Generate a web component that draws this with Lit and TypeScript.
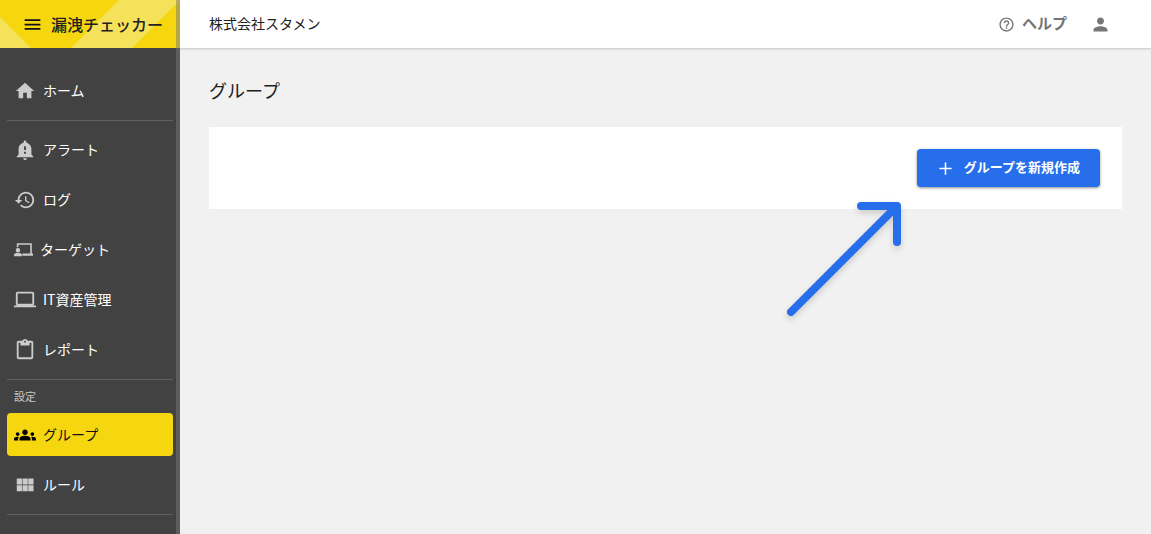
import { LitElement, html, css, svg, nothing } from "lit";
import { customElement, property, state } from "lit/decorators.js";
import { classMap } from "lit/directives/class-map.js";

const ICONS: Record<string, string> = {
  menu: "M3 18h18v-2H3v2zm0-5h18v-2H3v2zm0-7v2h18V6H3z",
  home: "M10 20v-6h4v6h5v-8h3L12 3 2 12h3v8z",
  alert:
    "M12 23c1.1 0 1.99-.89 1.99-1.99h-3.98c0 1.1.89 1.99 1.99 1.99zm7-6v-6c0-3.35-2.36-6.15-5.5-6.83V3c0-.83-.67-1.5-1.5-1.5s-1.5.67-1.5 1.5v1.17C7.36 4.85 5 7.65 5 11v6l-2 2v1h18v-1l-2-2zm-6-1h-2v-2h2v2zm0-4h-2V8h2v4z",
  log: "M13 3c-4.97 0-9 4.03-9 9H1l3.89 3.89.07.14L9 12H6c0-3.87 3.13-7 7-7s7 3.13 7 7-3.13 7-7 7c-1.93 0-3.68-.79-4.94-2.06l-1.42 1.42C8.27 19.99 10.51 21 13 21c4.97 0 9-4.03 9-9s-4.03-9-9-9zm-1 5v5l4.28 2.54.72-1.21-3.5-2.08V8H12z",
  target:
    "M3.500 4h19v13H24v3H10.500v-3H20.500V6H5.500v3h-2V4zM5 10a2.800 2.800 0 1 1 0 5.600A2.800 2.800 0 0 1 5 10zM0 20.500v-1.600c0-1.700 3-2.700 5-2.700s5 1 5 2.700v1.600H0z",
  laptop:
    "M20 18c1.100 0 1.990-.9 1.990-2L22 5c0-1.100-.9-2-2-2H4c-1.100 0-2 .9-2 2v11c0 1.100.9 2 2 2H0v2h24v-2h-4zM4 5h16v11H4V5z",
  report:
    "M19 2h-4.180C14.400.84 13.300 0 12 0c-1.300 0-2.400.84-2.820 2H5c-1.100 0-2 .9-2 2v16c0 1.100.9 2 2 2h14c1.100 0 2-.9 2-2V4c0-1.100-.9-2-2-2zm-7 0c.55 0 1 .45 1 1s-.45 1-1 1-1-.45-1-1 .45-1 1-1zm7 18H5V4h2v3h10V4h2v16z",
  groups:
    "M12 12.750c1.630 0 3.070.39 4.240.9 1.080.48 1.760 1.560 1.760 2.730V18H6v-1.610c0-1.180.68-2.260 1.760-2.730 1.170-.52 2.610-.91 4.240-.91zM4 13c1.100 0 2-.9 2-2s-.9-2-2-2-2 .9-2 2 .9 2 2 2zm1.130 1.100C4.760 14.040 4.390 14 4 14c-.99 0-1.930.21-2.780.58C.48 14.900 0 15.620 0 16.430V18h4.500v-1.610c0-.83.23-1.610.63-2.290zM20 13c1.100 0 2-.9 2-2s-.9-2-2-2-2 .9-2 2 .9 2 2 2zm4 3.430c0-.81-.48-1.530-1.220-1.850C21.930 14.210 20.990 14 20 14c-.39 0-.76.04-1.130.1.4.68.63 1.460.63 2.290V18H24v-1.570zM12 6c1.660 0 3 1.340 3 3s-1.340 3-3 3-3-1.340-3-3 1.340-3 3-3z",
  rules:
    "M3 5h5.700v6.500H3zM9.300 5H15v6.500H9.300zM15.600 5h5.700v6.500h-5.700zM3 12.200h5.700v6.500H3zM9.300 12.200H15v6.500H9.300zM15.600 12.200h5.700v6.500h-5.700z",
  help: "M11 18h2v-2h-2v2zm1-16C6.480 2 2 6.480 2 12s4.480 10 10 10 10-4.480 10-10S17.520 2 12 2zm0 18c-4.410 0-8-3.590-8-8s3.590-8 8-8 8 3.590 8 8-3.590 8-8 8zm0-14c-2.210 0-4 1.790-4 4h2c0-1.100.9-2 2-2s2 .9 2 2c0 2-3 1.750-3 5h2c0-2.250 3-2.500 3-5 0-2.210-1.790-4-4-4z",
  person:
    "M12 12c2.210 0 4-1.790 4-4s-1.790-4-4-4-4 1.790-4 4 1.790 4 4 4zm0 2c-2.670 0-8 1.340-8 4v2h16v-2c0-2.660-5.330-4-8-4z",
  plus: "M19 12.900h-6.100V19h-1.800v-6.100H5v-1.800h6.100V5h1.800v6.100H19z",
};

@customElement("ui-icon")
export class UiIcon extends LitElement {
  static styles = css`
    :host {
      display: block;
      flex: none;
    }
    .glyph {
      display: block;
      width: 100%;
      height: 100%;
      fill: currentColor;
      overflow: visible;
    }
  `;
  @property() name = "home";

  render() {
    return html`<svg class="glyph" viewBox="0 0 24 24" aria-hidden="true">
      ${svg`<path d=${ICONS[this.name]}></path>`}
    </svg>`;
  }
}

interface NavItem {
  id: string;
  label: string;
  icon: string;
  compact?: boolean;
}

interface NavSection {
  heading?: string;
  items: NavItem[];
}

const SECTIONS: NavSection[] = [
  { items: [{ id: "home", label: "ホーム", icon: "home" }] },
  {
    items: [
      { id: "alerts", label: "アラート", icon: "alert" },
      { id: "logs", label: "ログ", icon: "log" },
      { id: "targets", label: "ターゲット", icon: "target", compact: true },
      { id: "assets", label: "IT資産管理", icon: "laptop" },
      { id: "reports", label: "レポート", icon: "report" },
    ],
  },
  {
    heading: "設定",
    items: [
      { id: "groups", label: "グループ", icon: "groups" },
      { id: "rules", label: "ルール", icon: "rules" },
    ],
  },
];

@customElement("side-nav")
export class SideNav extends LitElement {
  static styles = css`
    :host {
      display: flex;
      flex-direction: column;
      box-sizing: border-box;
      background: #424242;
      color: #fff;
      position: relative;
    }
    .brand {
      position: relative;
      display: flex;
      align-items: center;
      gap: 8px;
      height: 48px;
      padding-left: 22px;
      background: #f5d60f;
      color: #212121;
      flex: none;
      overflow: hidden;
    }
    .stripes {
      position: absolute;
      left: 0;
      top: 0;
      width: 180px;
      height: 48px;
      fill: #f6e25a;
    }
    .toggle {
      position: relative;
      border: 0;
      padding: 0;
      background: none;
      color: #111;
      cursor: pointer;
    }
    .toggle ui-icon {
      width: 21px;
      height: 21px;
    }
    .name {
      position: relative;
      font-size: 16px;
      line-height: 24px;
      font-weight: 500;
      white-space: nowrap;
    }
    .list {
      padding: 21px 7px 0;
    }
    .section {
      display: flex;
      flex-direction: column;
      gap: 7px;
      margin: 0 0 7px;
      padding: 0 0 8px;
      list-style: none;
      border-bottom: 1px solid #616161;
    }
    .heading {
      margin: -7px 0 0;
      padding-left: 7px;
      font-size: 11px;
      font-weight: 400;
      line-height: 33px;
      color: #c8c8c8;
    }
    .link {
      display: flex;
      align-items: center;
      gap: 7px;
      height: 43px;
      padding-left: 7px;
      border-radius: 4px;
      color: #fff;
      font-size: 14px;
      line-height: 20px;
      text-decoration: none;
      white-space: nowrap;
    }
    .text {
      padding-bottom: 2px;
    }
    .link ui-icon {
      width: 22px;
      height: 22px;
      color: #ccc;
    }
    .compact ui-icon {
      width: 19px;
      height: 19px;
    }
    .active {
      background: #f5d60f;
      color: #111;
    }
    .active ui-icon {
      color: #000;
    }
    .rail {
      position: absolute;
      top: 0;
      right: 0;
      bottom: 0;
      width: 4px;
      background: rgba(120, 120, 120, 0.5);
    }
  `;

  @property() current = "groups";

  render() {
    return html`
      <div class="brand">
        <svg class="stripes" viewBox="0 0 180 48" aria-hidden="true">
          <path d="M0 17L31 48H0zM119 0H180L132 48H71z"></path>
        </svg>
        <button class="toggle" type="button" aria-label="メニュー">
          <ui-icon name="menu"></ui-icon>
        </button>
        <span class="name">漏洩チェッカー</span>
      </div>
      <nav class="list">
        ${SECTIONS.map(
          (s) => html`
            ${s.heading ? html`<h2 class="heading">${s.heading}</h2>` : nothing}
            <ul class="section">
              ${s.items.map(
                (i) => html`<li>
                  <a
                    href="#${i.id}"
                    class=${classMap({
                      link: true,
                      compact: !!i.compact,
                      active: i.id === this.current,
                    })}
                    ><ui-icon name=${i.icon}></ui-icon
                    ><span class="text">${i.label}</span></a
                  >
                </li>`
              )}
            </ul>
          `
        )}
      </nav>
      <div class="rail"></div>
    `;
  }
}

@customElement("app-root")
export class AppRoot extends LitElement {
  static styles = css`
    :host {
      display: grid;
      grid-template-columns: 180px minmax(0, 1fr);
      height: 100vh;
      overflow: hidden;
      background: #f1f1f1;
      color: #212121;
      font-family: "Noto Sans CJK JP", "Noto Sans", sans-serif;
      position: relative;
    }
    .page {
      display: flex;
      flex-direction: column;
    }
    .topbar {
      display: flex;
      align-items: center;
      height: 48px;
      padding: 0 40px 0 29px;
      background: #fff;
      box-shadow: 0 1px 2px rgba(0, 0, 0, 0.18);
    }
    .company {
      flex: 1;
      font-size: 14px;
      line-height: 20px;
      padding-bottom: 2px;
    }
    .help {
      display: flex;
      align-items: center;
      gap: 7px;
      margin-right: 23px;
      color: #757575;
      font-size: 15px;
      line-height: 20px;
      font-weight: 700;
      text-decoration: none;
    }
    .text {
      padding-bottom: 2px;
    }
    .help ui-icon {
      width: 17px;
      height: 17px;
    }
    .account {
      border: 0;
      padding: 0;
      background: none;
      color: #757575;
    }
    .account ui-icon {
      width: 21px;
      height: 21px;
    }
    .content {
      padding: 28px 29px;
    }
    .title {
      margin: 0 0 23px;
      font-size: 18px;
      font-weight: 400;
      line-height: 28px;
    }
    .card {
      display: flex;
      justify-content: flex-end;
      padding: 22px;
      background: #fff;
    }
    .create {
      display: flex;
      align-items: center;
      gap: 8px;
      height: 38px;
      padding: 0 20px 0 18px;
      border: 0;
      border-radius: 4px;
      background: #276eeb;
      color: #fff;
      font-family: inherit;
      font-size: 13px;
      line-height: 20px;
      font-weight: 700;
      box-shadow: 0 1px 3px rgba(0, 0, 0, 0.45);
      cursor: pointer;
    }
    .create ui-icon {
      width: 21px;
      height: 21px;
    }
    .pointer {
      position: absolute;
      top: 194px;
      right: 241px;
      width: 132px;
      height: 132px;
      fill: none;
      stroke: #276eeb;
      stroke-width: 8;
      stroke-linecap: round;
      stroke-linejoin: round;
      filter: drop-shadow(0 3px 3px rgba(0, 0, 0, 0.16));
      pointer-events: none;
    }
  `;

  @state() private current = "groups";

  render() {
    return html`
      <side-nav .current=${this.current}></side-nav>
      <div class="page">
        <header class="topbar">
          <span class="company">株式会社スタメン</span>
          <a class="help" href="#help"
            ><ui-icon name="help"></ui-icon><span class="text">ヘルプ</span></a
          >
          <button class="account" type="button" aria-label="アカウント">
            <ui-icon name="person"></ui-icon>
          </button>
        </header>
        <main class="content">
          <h1 class="title">グループ</h1>
          <section class="card">
            <button class="create" type="button">
              <ui-icon name="plus"></ui-icon><span class="text">グループを新規作成</span>
            </button>
          </section>
        </main>
      </div>
      <svg class="pointer" viewBox="0 0 132 132" aria-hidden="true">
        <path d="M13 118L119 12M83 12H119V48"></path>
      </svg>
    `;
  }
}
